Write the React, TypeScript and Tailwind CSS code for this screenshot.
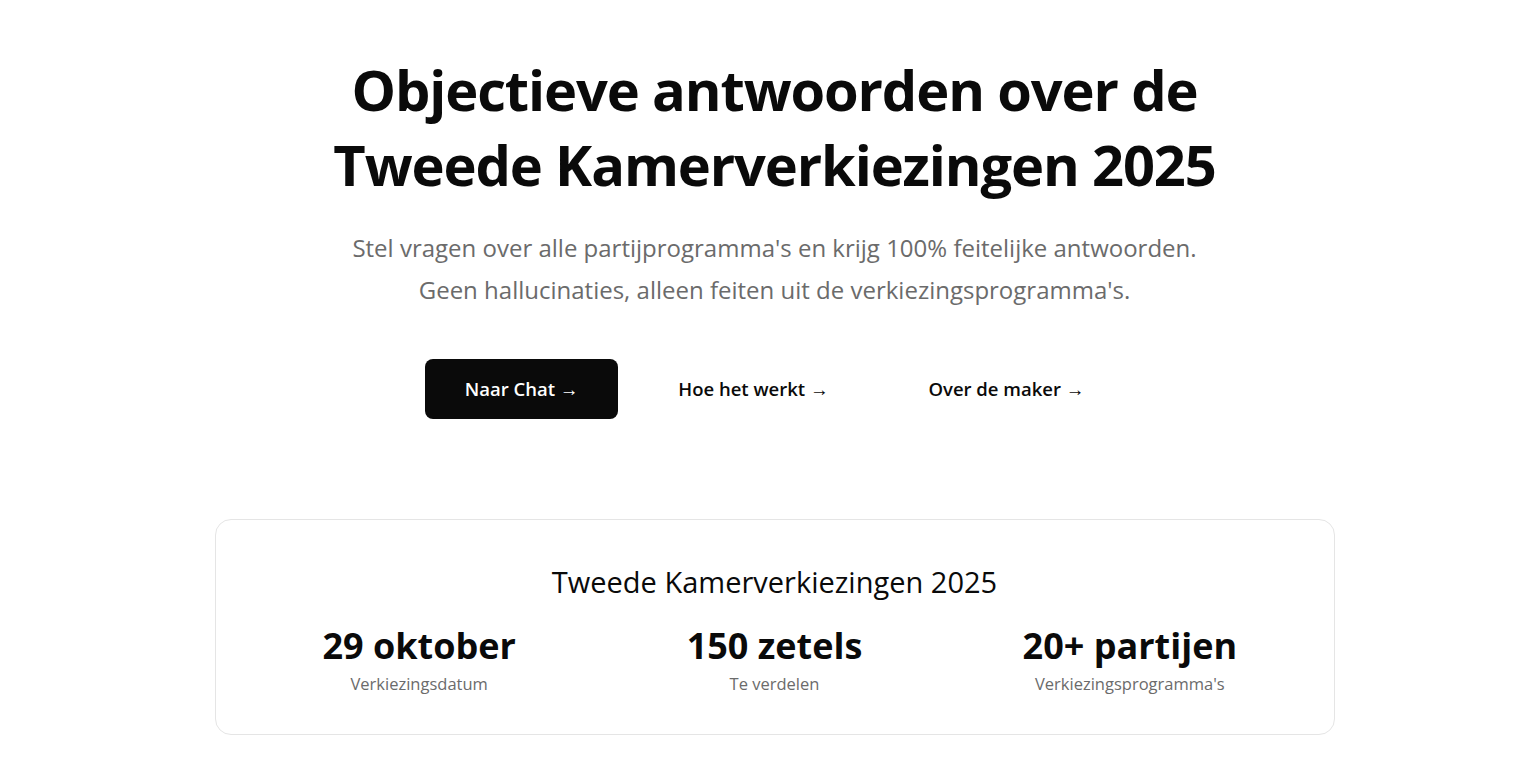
export default function App() {
  const stats = [
    { value: '29 oktober', label: 'Verkiezingsdatum' },
    { value: '150 zetels', label: 'Te verdelen' },
    { value: '20+ partijen', label: "Verkiezingsprogramma's" },
  ];

  return (
    <div className="min-h-screen bg-white pl-7 text-[#0a0a0a]" style={{ fontFamily: '"Open Sans", "Noto Sans", sans-serif' }}>
      <section className="flex flex-col items-center pt-[52px] text-center">
        <h1 className="text-[56px] font-bold leading-[75px] tracking-[-0.02em]">
          Objectieve antwoorden over de
          <br />
          Tweede Kamerverkiezingen 2025
        </h1>
        <p className="mt-[25px] text-2xl leading-[42px] text-[#6b6b6b]">
          Stel vragen over alle partijprogramma's en krijg 100% feitelijke antwoorden.
          <br />
          Geen hallucinaties, alleen feiten uit de verkiezingsprogramma's.
        </p>
        <div className="mt-[48px] flex items-center gap-5">
          <button className="rounded-lg bg-[#0a0a0a] px-10 py-4 text-[18.5px] font-semibold leading-7 text-white">
            Naar Chat →
          </button>
          <button className="rounded-lg px-10 py-4 text-[18.5px] font-semibold leading-7">Hoe het werkt →</button>
          <button className="rounded-lg px-10 py-4 text-[18.5px] font-semibold leading-7">Over de maker →</button>
        </div>
      </section>

      <section className="mt-[100px] flex justify-center">
        <div className="w-[1120px] rounded-2xl border border-[#e5e5e5] px-8 pt-[44px] pb-[38px] text-center">
          <h2 className="text-[29px] leading-9">Tweede Kamerverkiezingen 2025</h2>
          <div className="mt-[26px] grid grid-cols-3 gap-3">
            {stats.map((s) => (
              <div key={s.label}>
                <div className="text-4xl font-bold leading-10">{s.value}</div>
                <div className="mt-[6px] text-[16.5px] leading-6 text-[#6b6b6b]">{s.label}</div>
              </div>
            ))}
          </div>
        </div>
      </section>
    </div>
  );
}
